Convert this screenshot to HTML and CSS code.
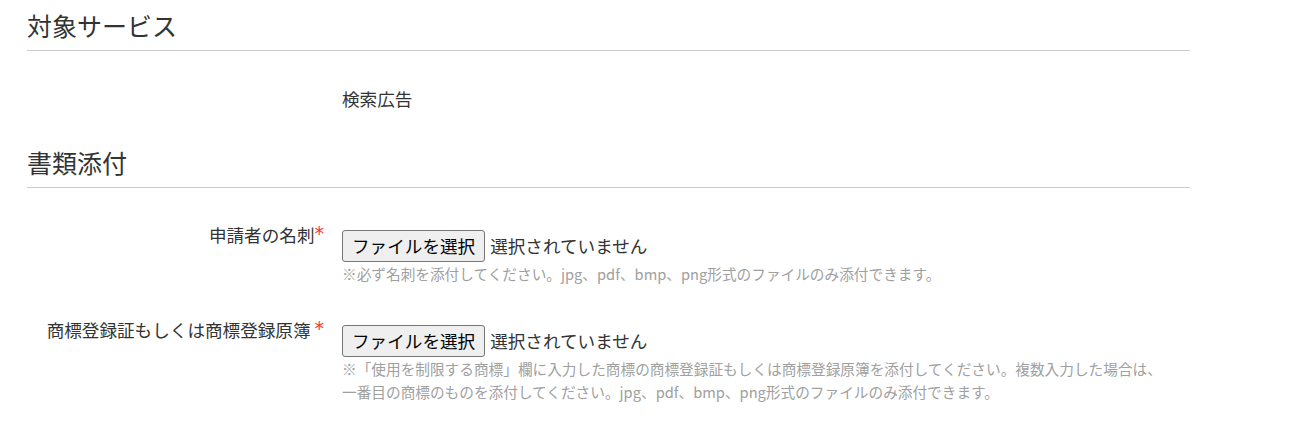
FILE: index.html
```html
<!DOCTYPE html>
<html lang="ja">
<head>
<meta charset="utf-8">
<title>書類添付</title>
<link rel="stylesheet" href="styles.css">
</head>
<body>
<div class="page">
  <h2 class="section-title">対象サービス</h2>
  <div class="form-row service-row">
    <div class="label"></div>
    <div class="value">検索広告</div>
  </div>

  <h2 class="section-title second">書類添付</h2>
  <div class="form-row upload-row first">
    <div class="label">申請者の名刺<span class="req">*</span></div>
    <div class="control">
      <div class="file">
        <button class="file-btn" type="button">ファイルを選択</button>
        <span class="file-name">選択されていません</span>
      </div>
      <p class="help">※必ず名刺を添付してください。jpg、pdf、bmp、png形式のファイルのみ添付できます。</p>
    </div>
  </div>
  <div class="form-row upload-row">
    <div class="label">商標登録証もしくは商標登録原簿 <span class="req">*</span></div>
    <div class="control">
      <div class="file">
        <button class="file-btn" type="button">ファイルを選択</button>
        <span class="file-name">選択されていません</span>
      </div>
      <p class="help">※「使用を制限する商標」欄に入力した商標の商標登録証もしくは商標登録原簿を添付してください。複数入力した場合は、一番目の商標のものを添付してください。jpg、pdf、bmp、png形式のファイルのみ添付できます。</p>
    </div>
  </div>
</div>
</body>
</html>
```

FILE: styles.css
```css
html, body {
  margin: 0;
  padding: 0;
  background: #fff;
}
body {
  font-family: "Noto Sans CJK JP", "Noto Sans", sans-serif;
  color: #333;
  font-size: 17.6px;
}
.page {
  width: 1163px;
  padding-left: 27px;
}
.section-title {
  margin: 0;
  padding: 10px 0 10px;
  font-size: 25px;
  line-height: 30px;
  font-weight: normal;
  color: #333;
  border-bottom: 1px solid #ccc;
}
.section-title.second {
  margin-top: 25px;
}
.form-row {
  display: grid;
  grid-template-columns: 297px 1fr;
  column-gap: 18px;
  padding-right: 18px;
  align-items: start;
}
.label {
  text-align: right;
  line-height: 26px;
  white-space: nowrap;
}
.req {
  color: #f33;
  font-family: "DejaVu Sans", sans-serif;
  font-size: 19px;
  line-height: 20px;
  vertical-align: top;
  position: relative;
  top: 1px;
}
.service-row {
  margin-top: 35px;
}
.value {
  line-height: 26px;
}
.upload-row {
  margin-top: 32px;
}
.upload-row.first {
  margin-top: 34px;
}
.control {
  padding-top: 8px;
}
.file {
  display: flex;
  align-items: center;
  gap: 5px;
}
.file-btn {
  height: 32px;
  padding: 0 9px;
  border: 1px solid #767676;
  border-radius: 3px;
  background: #efefef;
  color: #000;
  font-family: inherit;
  font-size: 17.6px;
  line-height: 30px;
}
.file-name {
  line-height: 26px;
}
.help {
  margin: 0;
  font-size: 14.67px;
  line-height: 23px;
  color: #a0a0a0;
}
```
